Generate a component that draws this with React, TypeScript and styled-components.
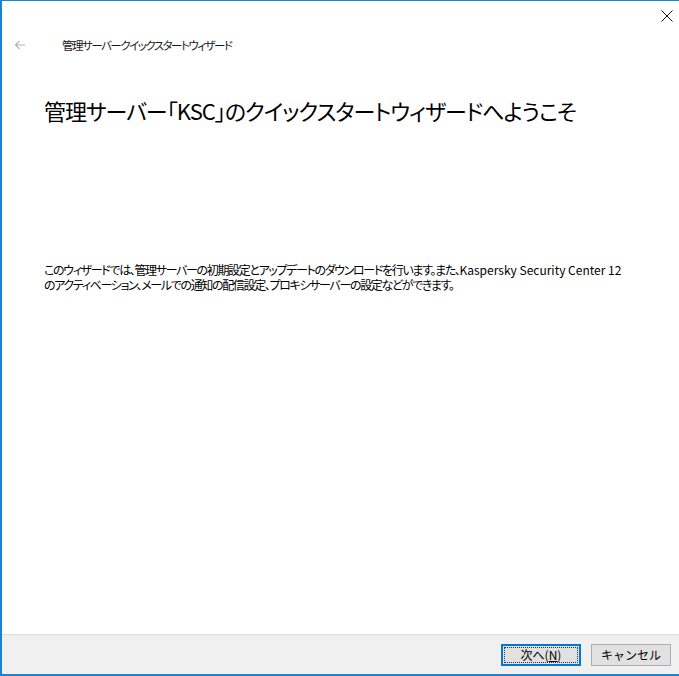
import * as React from 'react'
import styled, { createGlobalStyle } from 'styled-components'

const GlobalStyle = createGlobalStyle`
  html, body {
    margin: 0;
    padding: 0;
    background: #ffffff;
  }
  body {
    font-family: "Noto Sans CJK JP", "Noto Sans", sans-serif;
    font-feature-settings: "palt";
  }
`

const SWindow = styled.div`
  width: 679px;
  height: 676px;
  box-sizing: border-box;
  border-left: 2px solid #1883d7;
  border-top: 1px solid #1883d7;
  border-bottom: 2px solid #1883d7;
  display: flex;
  flex-direction: column;
  background: #ffffff;
  overflow: hidden;
`
const STitleBar = styled.div`
  height: 29px;
  display: flex;
  justify-content: flex-end;
  align-items: center;
`
const SCloseButton = styled.div`
  width: 40px;
  height: 29px;
  display: flex;
  align-items: center;
  justify-content: center;
  margin-right: -8px;
`
const SNavRow = styled.div`
  height: 30px;
  display: flex;
  align-items: center;
`
const SBackArrow = styled.div`
  width: 16px;
  margin-left: 12px;
  display: flex;
  align-items: center;
`
const SNavTitle = styled.div`
  margin-left: 32px;
  font-size: 11.5px;
  color: #1a1a1a;
  letter-spacing: -1.5px;
`
const SContent = styled.div`
  flex: 1;
  padding: 0 42px;
  display: flex;
  flex-direction: column;
`
const SHeading = styled.h1`
  margin: 35px 0 0 0;
  font-size: 22px;
  font-weight: 400;
  line-height: 30px;
  color: #000000;
  letter-spacing: -1px;
`
const SDescription = styled.div`
  margin-top: 137px;
  display: flex;
  flex-direction: column;
  font-size: 12px;
  color: #000000;
  letter-spacing: -1.35px;
  white-space: nowrap;
`
const SLine = styled.div`
  height: 15px;
  line-height: 15px;
`
const SLatin = styled.span`
  letter-spacing: 0;
`
const SFooter = styled.div`
  height: 39px;
  border-top: 1px solid #dcdcdc;
  background: #f0f0f0;
  display: flex;
  justify-content: flex-end;
  align-items: center;
  gap: 10px;
  padding-right: 8px;
`
const SButton = styled.button<{ primary?: boolean }>`
  width: 80px;
  height: 22px;
  box-sizing: border-box;
  padding: 0;
  font-family: inherit;
  font-size: 12px;
  color: #000000;
  background: #e1e1e1;
  border: 1px solid ${(p) => (p.primary ? '#0078d7' : '#adadad')};
  box-shadow: ${(p) => (p.primary ? 'inset 0 0 0 1px #0078d7' : 'none')};
  display: flex;
  align-items: center;
  justify-content: center;
  position: relative;
  &::after {
    content: '';
    display: ${(p) => (p.primary ? 'block' : 'none')};
    position: absolute;
    inset: 2px;
    border: 1px dotted #333333;
  }
`
const SUnderline = styled.span`
  text-decoration: underline;
`

const App = () => {
  return (
    <>
      <GlobalStyle />
      <SWindow>
        <STitleBar>
          <SCloseButton>
            <svg width="12" height="12" viewBox="0 0 12 12">
              <path d="M0.5 0.5 L11.5 11.5 M11.5 0.5 L0.5 11.5" stroke="#111" strokeWidth="1" />
            </svg>
          </SCloseButton>
        </STitleBar>
        <SNavRow>
          <SBackArrow>
            <svg width="12" height="10" viewBox="0 0 12 10">
              <path d="M11 5 H1.5 M5.5 1 L1.5 5 L5.5 9" stroke="#b4b4b4" strokeWidth="1.2" fill="none" />
            </svg>
          </SBackArrow>
          <SNavTitle>管理サーバークイックスタートウィザード</SNavTitle>
        </SNavRow>
        <SContent>
          <SHeading>管理サーバー「KSC」のクイックスタートウィザードへようこそ</SHeading>
          <SDescription>
            <SLine>
              このウィザードでは、管理サーバーの初期設定とアップデートのダウンロードを行います。また、
              <SLatin>Kaspersky Security Center 12</SLatin>
            </SLine>
            <SLine>のアクティベーション、メールでの通知の配信設定、プロキシサーバーの設定などができます。</SLine>
          </SDescription>
        </SContent>
        <SFooter>
          <SButton primary>
            次へ(<SUnderline>N</SUnderline>)
          </SButton>
          <SButton>キャンセル</SButton>
        </SFooter>
      </SWindow>
    </>
  )
}

export default App
